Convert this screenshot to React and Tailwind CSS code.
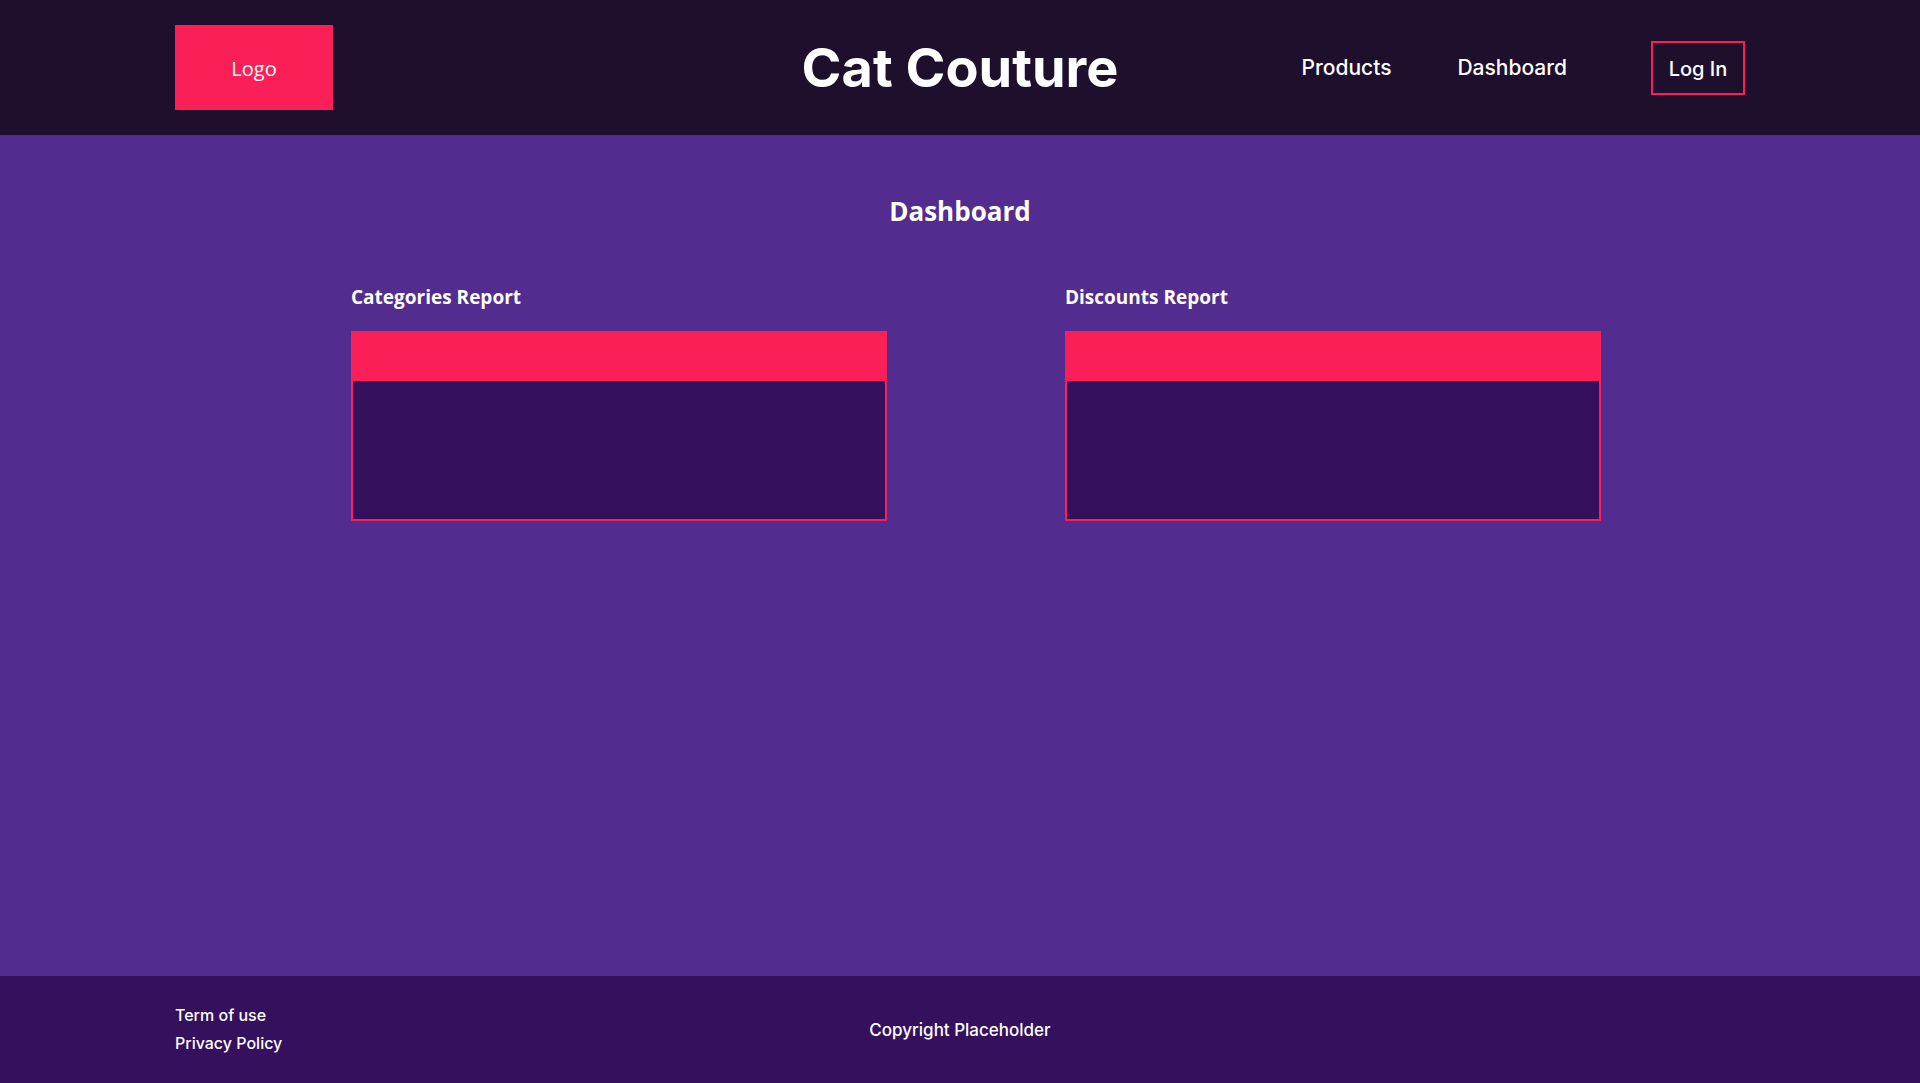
const reports = ["Categories Report", "Discounts Report"];

function Header() {
  return (
    <header className="bg-[#1e0f2d] px-6 py-[25px]">
      <div className="mx-auto grid max-w-[1570px] grid-cols-[1fr_auto_1fr] items-center">
        <a
          href="#home"
          className="flex h-[85px] w-[158px] items-center justify-center bg-[#fa1f56] pt-0.5 font-['Open_Sans',sans-serif] text-xl"
        >
          Logo
        </a>
        <h1 className="text-[54px] leading-[64px] font-bold">Cat Couture</h1>
        <nav className="flex items-center justify-end text-[21px] leading-7 font-medium">
          <a href="#products" className="mr-[66px]">Products</a>
          <a href="#dashboard" className="mr-[84px]">Dashboard</a>
          <button
            type="button"
            className="h-[54px] w-[94px] cursor-pointer border-2 border-[#fa1f56] pt-0.5 text-xl font-medium"
          >
            Log In
          </button>
        </nav>
      </div>
    </header>
  );
}

function Report({ title }) {
  return (
    <section>
      <h3 className="mb-5 text-[19px] leading-7 font-bold">{title}</h3>
      <table aria-label={title} className="w-full border-collapse">
        <thead>
          <tr>
            <th className="h-[50px] bg-[#fa1f56]"></th>
          </tr>
        </thead>
        <tbody>
          <tr>
            <td className="p-0">
              <div className="h-[140px] border-2 border-t-0 border-[#fa1f56] bg-[#35105c]"></div>
            </td>
          </tr>
        </tbody>
      </table>
    </section>
  );
}

function Footer() {
  return (
    <footer className="bg-[#35105c] px-6 pt-[25px] pb-[26px] font-medium">
      <div className="mx-auto grid max-w-[1570px] grid-cols-[1fr_auto_1fr] items-center">
        <div className="flex flex-col items-start text-base leading-7">
          <a href="#terms">Term of use</a>
          <a href="#privacy">Privacy Policy</a>
        </div>
        <p className="pt-0.5 text-[17px] leading-7">Copyright Placeholder</p>
      </div>
    </footer>
  );
}

export default function App() {
  return (
    <div className="flex min-h-screen flex-col bg-[#522c8e] font-['Inter',sans-serif] text-white">
      <Header />
      <main className="flex-1 px-6 pt-[58px] pb-12 font-['Open_Sans',sans-serif]">
        <h2 className="text-center text-[26px] leading-9 font-bold">Dashboard</h2>
        <div className="mx-auto mt-[54px] grid max-w-[1282px] grid-cols-2 gap-[178px] pl-8">
          {reports.map((title) => (
            <Report key={title} title={title} />
          ))}
        </div>
      </main>
      <Footer />
    </div>
  );
}
